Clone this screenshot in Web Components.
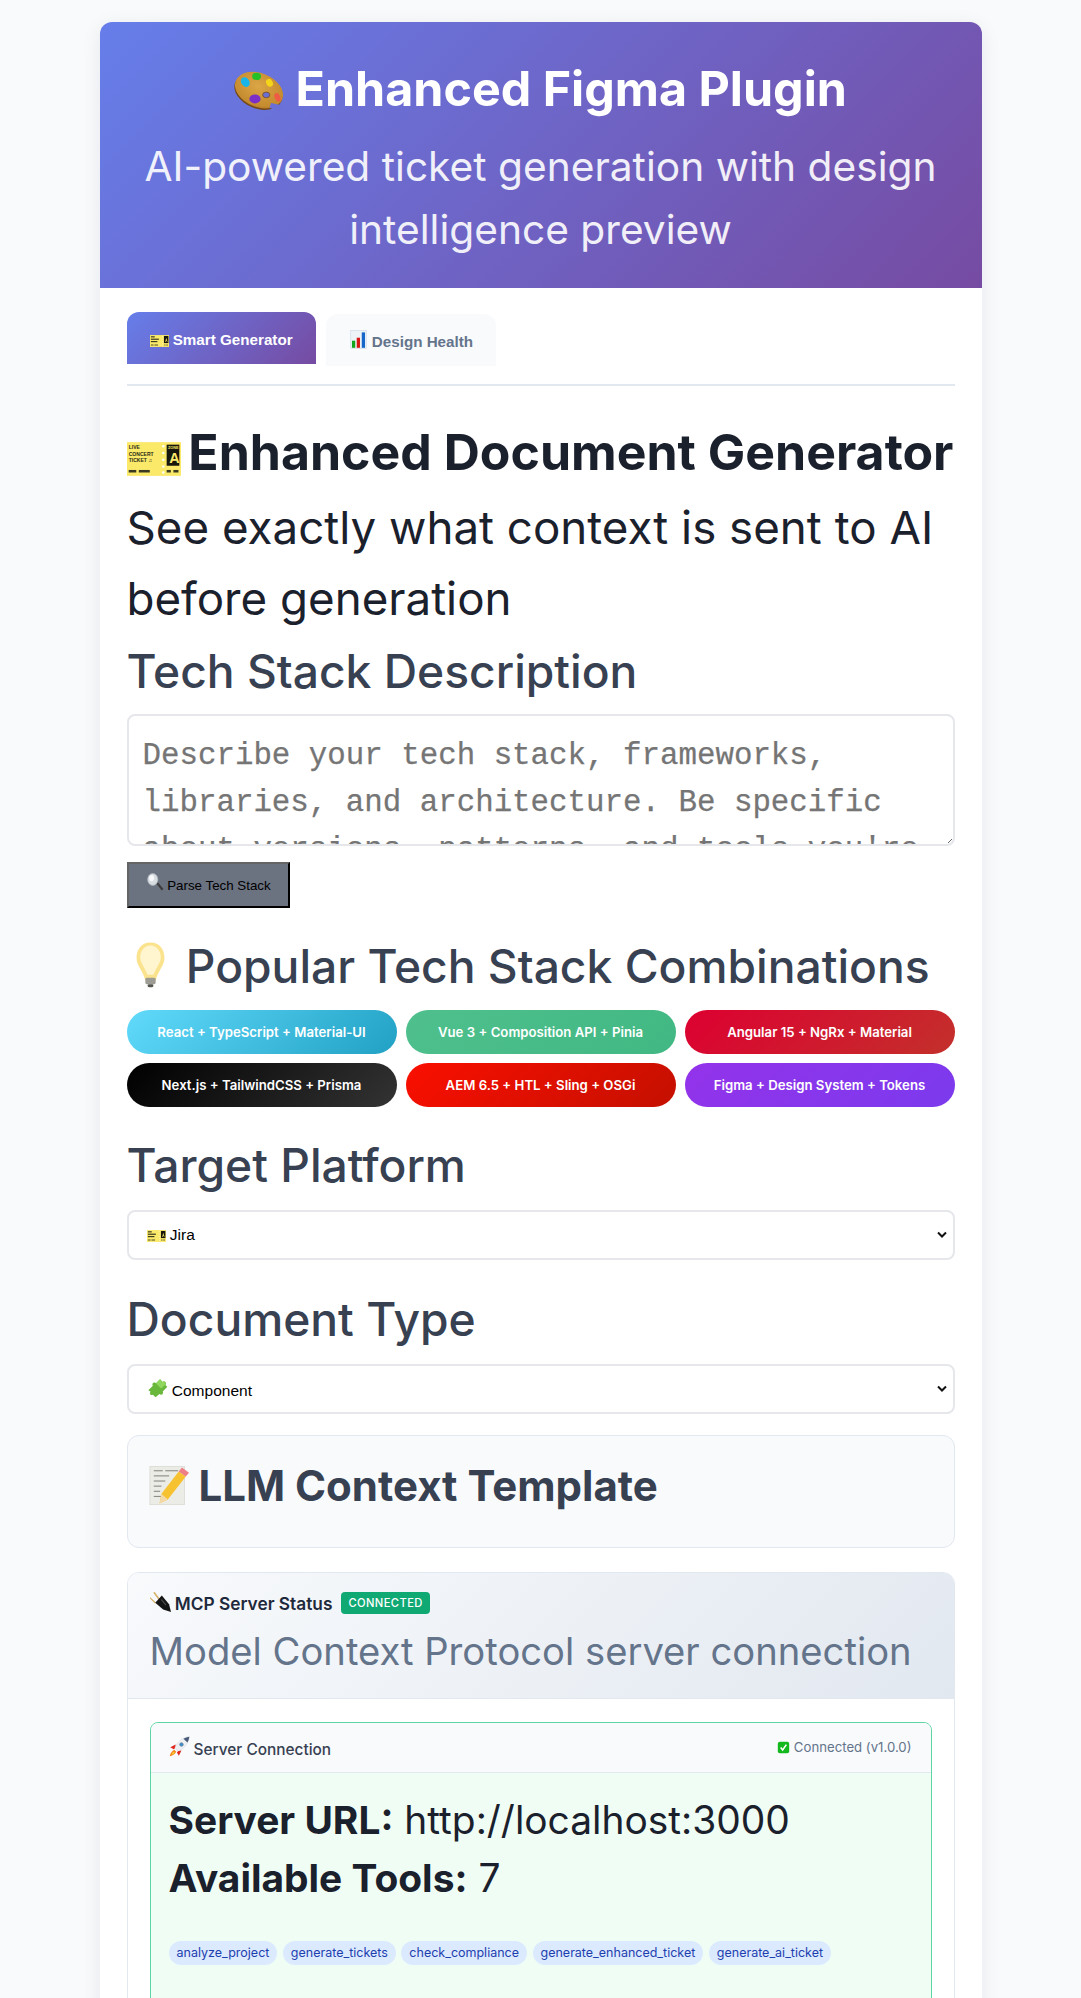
<!DOCTYPE html>
<html lang="en">
<head>
<meta charset="utf-8">
<title>Enhanced Figma Plugin</title>
<style>
html, body { margin: 0; height: 1998px; overflow: hidden; background: #f8fafc; font-family: Inter, "Liberation Sans", sans-serif; }
</style>
</head>
<body>
<plugin-shell>
  <plugin-header slot="header">
    <span slot="title"><emoji-icon name="palette" size="50" tall="43"></emoji-icon> Enhanced Figma Plugin</span>
    AI-powered ticket generation with design intelligence preview
  </plugin-header>

  <tab-bar>
    <tab-item active><emoji-icon name="ticket" size="19" tall="12"></emoji-icon> Smart Generator</tab-item>
    <tab-item><emoji-icon name="chart" size="19"></emoji-icon> Design Health</tab-item>
  </tab-bar>

  <page-intro>
    <span slot="title"><emoji-icon name="ticketBig" size="54" tall="34" style="margin-right:-4px"></emoji-icon> Enhanced Document Generator</span>
    See exactly what context is sent to AI before generation
  </page-intro>

  <field-label>Tech Stack Description</field-label>
  <mono-textbox>Describe your tech stack, frameworks, libraries, and architecture. Be specific about versions, patterns, and tools you're using.</mono-textbox>
  <plain-button><emoji-icon name="magnifier" size="18"></emoji-icon> Parse Tech Stack</plain-button>

  <field-label spaced><emoji-icon name="bulb" size="47"></emoji-icon> Popular Tech Stack Combinations</field-label>
  <pill-grid>
    <stack-pill from="#61dafb" to="#21a1c4">React + TypeScript + Material-UI</stack-pill>
    <stack-pill from="#4fc08d" to="#41b883">Vue 3 + Composition API + Pinia</stack-pill>
    <stack-pill from="#dd0031" to="#c3302b">Angular 15 + NgRx + Material</stack-pill>
    <stack-pill from="#000000" to="#333333">Next.js + TailwindCSS + Prisma</stack-pill>
    <stack-pill from="#fa0f00" to="#c41000">AEM 6.5 + HTL + Sling + OSGi</stack-pill>
    <stack-pill from="#9333ea" to="#7c3aed">Figma + Design System + Tokens</stack-pill>
  </pill-grid>

  <field-label spaced style="margin-bottom:9px">Target Platform</field-label>
  <select-box><emoji-icon name="ticket" size="19" tall="12"></emoji-icon> Jira</select-box>

  <field-label spaced style="margin-top:23px;margin-bottom:9px">Document Type</field-label>
  <select-box><emoji-icon name="puzzle" size="21"></emoji-icon> Component</select-box>

  <template-panel><emoji-icon name="memo" size="41"></emoji-icon> LLM Context Template</template-panel>

  <status-panel>
    <span slot="title"><emoji-icon name="plug" size="21"></emoji-icon> MCP Server Status</span>
    <span slot="badge">CONNECTED</span>
    <span slot="subtitle">Model Context Protocol server connection</span>
    <connection-card>
      <span slot="title"><emoji-icon name="rocket" size="21"></emoji-icon> Server Connection</span>
      <span slot="state"><emoji-icon name="check" size="13"></emoji-icon> Connected (v1.0.0)</span>
      <info-line><b>Server URL:</b> http://localhost:3000</info-line>
      <info-line><b>Available Tools:</b> 7</info-line>
      <tool-list>
        <tool-tag>analyze_project</tool-tag>
        <tool-tag>generate_tickets</tool-tag>
        <tool-tag>check_compliance</tool-tag>
        <tool-tag>generate_enhanced_ticket</tool-tag>
        <tool-tag>generate_ai_ticket</tool-tag>
      </tool-list>
    </connection-card>
  </status-panel>
</plugin-shell>

<script>
const EMOJI = {
  palette: `<svg viewBox="1 8 62 53"><defs><radialGradient id="wood" cx=".45" cy=".4" r=".7"><stop offset="0" stop-color="#dba646"/><stop offset=".8" stop-color="#c48a2e"/><stop offset="1" stop-color="#9a6420"/></radialGradient></defs><g transform="rotate(22 32 34)"><ellipse cx="32" cy="36" rx="31" ry="21" fill="#74491a"/><ellipse cx="32" cy="34" rx="31" ry="21" fill="url(#wood)"/></g><ellipse cx="41" cy="40" rx="4.500" ry="3.500" fill="#6a6fd6" stroke="#7a4d18"/><path d="M47 50l14 3-4 8-12-5z" fill="#6a6fd6"/><ellipse cx="15" cy="24" rx="5" ry="6.500" transform="rotate(-35 15 24)" fill="#19b5e8"/><ellipse cx="29" cy="17" rx="5.500" ry="4.500" fill="#25c025"/><ellipse cx="45" cy="25" rx="4" ry="5" transform="rotate(-30 45 25)" fill="#f4d51a"/><ellipse cx="27" cy="45" rx="7" ry="5.500" fill="#7b2fc9"/><ellipse cx="55" cy="43" rx="3.500" ry="5.500" transform="rotate(-25 55 43)" fill="#ef5b45"/></svg>`,
  ticket: `<svg viewBox="0 0 64 40"><rect width="64" height="40" fill="#fbe96a"/><rect x="47" y="3" width="15" height="24" fill="#16160c"/><path d="M51 23l3.500-12h1l3.500 12h-2l-.7-3h-2.600l-.7 3zM53.300 18.300h1.900l-.9-3.500z" fill="#fbe96a"/><g fill="#3a3a20"><rect x="3" y="4" width="13" height="4"/><rect x="3" y="12" width="27" height="4"/><rect x="3" y="20" width="22" height="4"/><rect x="3" y="32" width="9" height="3"/><rect x="15" y="32" width="12" height="3"/><rect x="48" y="32" width="4" height="3"/><rect x="55" y="32" width="5" height="3"/></g><g fill="#fff"><circle cx="43" cy="5" r="1.500"/><circle cx="43" cy="13" r="1.500"/><circle cx="43" cy="21" r="1.500"/><circle cx="43" cy="29" r="1.500"/><circle cx="43" cy="36" r="1.500"/></g></svg>`,
  ticketBig: `<svg viewBox="0 0 64 40"><rect width="64" height="40" fill="#fbe96a"/><rect x="47" y="3" width="15" height="25" fill="#16160c"/><g font-family="Liberation Sans, sans-serif" font-weight="700" fill="#2a2a14" font-size="6"><text x="2" y="8">LIVE</text><text x="2" y="16">CONCERT</text><text x="2" y="24">TICKET ♫</text></g><text x="48.500" y="8" font-family="Liberation Sans, sans-serif" font-size="4.500" font-weight="700" fill="#fbe96a">ZONE</text><text x="50" y="25" font-family="Liberation Sans, sans-serif" font-size="17" font-weight="700" fill="#fbe96a">A</text><g fill="#3a3a20"><rect x="2" y="33" width="9" height="3"/><rect x="14" y="33" width="13" height="3"/><rect x="47" y="33" width="5" height="3"/><rect x="55" y="33" width="6" height="3"/></g><g fill="#fff"><circle cx="43" cy="5" r="1.500"/><circle cx="43" cy="13" r="1.500"/><circle cx="43" cy="21" r="1.500"/><circle cx="43" cy="29" r="1.500"/><circle cx="43" cy="36" r="1.500"/></g></svg>`,
  chart: `<svg viewBox="0 0 64 64"><rect x="6" y="2" width="52" height="60" fill="#eef3f8" stroke="#c9d6e4" stroke-width="2"/><rect x="10" y="36" width="11" height="24" fill="#0fa31e"/><rect x="26" y="26" width="11" height="34" fill="#d81515"/><rect x="43" y="8" width="11" height="52" fill="#1766c9"/></svg>`,
  magnifier: `<svg viewBox="0 0 64 64"><path d="M36 36l6-3 20 24-6 5z" fill="#3b3b3b"/><ellipse cx="24" cy="23" rx="18" ry="21" fill="#d8dde2" stroke="#b0b6bc" stroke-width="3"/><ellipse cx="20" cy="18" rx="9" ry="11" fill="#f6f8fa"/></svg>`,
  bulb: `<svg viewBox="0 0 64 64"><path d="M32 2C19 2 13 12 13 23c0 11 9 17 12 31h14c3-14 12-20 12-31C51 12 45 2 32 2z" fill="#fbe38e"/><path d="M32 6c-9 0-14 8-14 16s7 15 10 24h8c3-9 10-16 10-24S41 6 32 6z" fill="#fff6cf"/><rect x="25" y="50" width="14" height="9" rx="2" fill="#9c9c94"/><rect x="28" y="59" width="8" height="4" rx="2" fill="#55554f"/></svg>`,
  puzzle: `<svg viewBox="0 0 64 64"><path d="M4 40l14-13c-5-7 4-14 10-8l12-12 8 8c6-5 14 3 8 9l6 6-14 14c4 7-4 13-10 8L26 62l-8-8c-7 4-12-4-7-9z" fill="#69b83c"/><path d="M27 19l12-12 8 8c6-5 14 3 8 9L43 35z" fill="#8fd65c"/></svg>`,
  memo: `<svg viewBox="0 0 64 64"><rect x="3" y="2" width="54" height="60" fill="#ececE6" stroke="#d4d4cc"/><g stroke="#7d7d78" stroke-width="1.500"><path d="M9 9h14M27 9h20M9 17h24M9 25h18M9 33h12M9 41h10M9 49h14"/></g><path d="M18 60l3-15L48 10l11 8-28 36z" fill="#f7c230"/><path d="M18 60l3-15 10 9z" fill="#f3d9a8"/><path d="M48 10l5-6 11 8-5 6z" fill="#ef7f86"/></svg>`,
  plug: `<svg viewBox="0 0 64 64"><path d="M14 2l18 25-4 3L10 5zM1 19l17 16-3 3L-1 22z" fill="#d6b26a"/><path d="M16 36L36 14l22 26 6 24-24-8z" fill="#141414"/><path d="M36 24l14 18-3 2-14-17z" fill="#4a4a4a"/></svg>`,
  rocket: `<svg viewBox="0 0 64 64"><path d="M20 26L4 34l10 6 6-4zM38 44l-8 16-6-10 4-4z" fill="#e0281f"/><path d="M62 2C44 4 26 16 18 36l10 10c20-8 32-26 34-44z" fill="#eef0f4" stroke="#c3c9d2"/><path d="M62 2c-7 1-13 3-18 6l12 12c3-5 5-11 6-18z" fill="#4a5a78"/><circle cx="38" cy="26" r="5.500" fill="#3b8fd4" stroke="#6b7a8c" stroke-width="2"/><path d="M16 42C8 46 4 54 2 62c8-2 16-6 20-14z" fill="#f5871c"/><path d="M14 48c-3 2-5 6-6 9 4-1 7-3 9-6z" fill="#fbd63a"/></svg>`,
  check: `<svg viewBox="0 0 64 64"><rect x="4" y="4" width="56" height="56" rx="10" fill="#12b81c"/><path d="M18 32l10 12 18-26" fill="none" stroke="#fff" stroke-width="8"/></svg>`
}

// small helper so each element only has to give its markup
class ShadowBase extends HTMLElement {
  constructor(html) {
    super()
    this.attachShadow({ mode: 'open' }).innerHTML = html
  }
}

class EmojiIcon extends HTMLElement {
  constructor() {
    super()
    this.attachShadow({ mode: 'open' })
  }
  connectedCallback() {
    const size = this.getAttribute('size') || 16
    const tall = this.getAttribute('tall') || size
    this.shadowRoot.innerHTML = `<style>
      :host { display: inline-block; vertical-align: -0.12em; width: ${size}px; height: ${tall}px; }
      svg { display: block; width: 100%; height: 100%; }
    </style>${EMOJI[this.getAttribute('name')]}`
  }
}

class PluginShell extends ShadowBase {
  constructor() {
    super(`<style>
      :host { display: block; width: 882px; margin: 22px auto 0; background: #fff; border-radius: 12px; box-shadow: 0 4px 20px rgba(15,23,42,.08); }
      main { padding: 24px 27px 200px; display: flex; flex-direction: column; }
    </style><slot name="header"></slot><main><slot></slot></main>`)
  }
}

class PluginHeader extends ShadowBase {
  constructor() {
    super(`<style>
      :host { display: block; height: 266px; box-sizing: border-box; padding: 32px 32px 0; text-align: center; color: #fff; background: linear-gradient(135deg, #667eea 0%, #764ba2 100%); border-radius: 12px 12px 0 0; }
      h1 { margin: 0 0 12px; font-size: 48.400px; line-height: 70px; font-weight: 700; }
      p { margin: 0; font-size: 40.700px; line-height: 62.500px; opacity: .9; }
    </style><h1><slot name="title"></slot></h1><p><slot></slot></p>`)
  }
}

class TabBar extends ShadowBase {
  constructor() {
    super(`<style>
      :host { display: flex; align-items: flex-start; gap: 10px; height: 72px; border-bottom: 2px solid #e2e8f0; }
    </style><slot></slot>`)
  }
}

class TabItem extends ShadowBase {
  constructor() {
    super(`<style>
      :host { display: block; margin-top: 2px; padding: 0 23px; height: 52px; border-radius: 12px 12px 0 0; background: #f8fafc; color: #64748b; font: bold 15.200px/56px "Liberation Sans", sans-serif; white-space: nowrap; }
      :host([active]) { margin-top: 0; color: #fff; background: linear-gradient(135deg, #667eea 0%, #764ba2 100%); }
    </style><slot></slot>`)
  }
}

class PageIntro extends ShadowBase {
  constructor() {
    super(`<style>
      :host { display: block; margin-top: 30px; color: #1a202c; }
      h2 { margin: 0; font-size: 50px; line-height: 72px; font-weight: 700; white-space: nowrap; }
      p { margin: 4px 0 0; font-size: 45.700px; line-height: 71.400px; }
    </style><h2><slot name="title"></slot></h2><p><slot></slot></p>`)
  }
}

class FieldLabel extends ShadowBase {
  constructor() {
    super(`<style>
      :host { display: block; font-size: 46.200px; line-height: 72px; font-weight: 500; color: #374151; white-space: nowrap; margin-bottom: 7px; }
      :host([spaced]) { margin-top: 22px; margin-bottom: 8px; }
    </style><slot></slot>`)
  }
}

class MonoTextbox extends ShadowBase {
  constructor() {
    super(`<style>
      :host { display: block; position: relative; box-sizing: border-box; height: 132px; border: 2px solid #e5e7eb; border-radius: 8px; overflow: hidden; background: #fff; padding: 16px 14px; color: #757575; font: 30.800px/47px "Liberation Mono", monospace; -webkit-text-stroke: .25px #757575; }
      svg { position: absolute; right: 0; bottom: 0; }
    </style><slot></slot><svg width="8" height="8" viewBox="0 0 8 8"><path d="M7 3L3 7" stroke="#666" fill="none"/></svg>`)
  }
}

class PlainButton extends ShadowBase {
  constructor() {
    super(`<style>
      :host { display: block; align-self: flex-start; box-sizing: border-box; margin-top: 16px; padding: 0 17px; height: 46px; border: 2px outset #111; background: #6b7280; color: #000; font: 13.333px/43px "Liberation Sans", sans-serif; }
    </style><slot></slot>`)
  }
}

class PillGrid extends ShadowBase {
  constructor() {
    super(`<style>
      :host { display: grid; grid-template-columns: repeat(3, 1fr); gap: 9px; }
    </style><slot></slot>`)
  }
}

class StackPill extends ShadowBase {
  constructor() {
    super(`<style>
      :host { display: block; height: 44px; border-radius: 22px; text-align: center; color: #fff; font-size: 13.200px; line-height: 44px; font-weight: 600; white-space: nowrap; background: linear-gradient(135deg, var(--from), var(--to)); }
    </style><slot></slot>`)
  }
  connectedCallback() {
    this.style.setProperty('--from', this.getAttribute('from'))
    this.style.setProperty('--to', this.getAttribute('to'))
  }
}

class SelectBox extends ShadowBase {
  constructor() {
    super(`<style>
      :host { display: flex; align-items: center; box-sizing: border-box; height: 50px; padding: 0 6px 0 18px; border: 2px solid #e5e7eb; border-radius: 8px; background: #fff; color: #000; font: 15.500px "Liberation Sans", sans-serif; }
      div { flex: 1; }
    </style><div><slot></slot></div><svg width="10" height="8" viewBox="0 0 10 8"><path d="M1 1.500l4 4 4-4" fill="none" stroke="#111" stroke-width="2"/></svg>`)
  }
}

class TemplatePanel extends ShadowBase {
  constructor() {
    super(`<style>
      :host { display: block; box-sizing: border-box; height: 113px; margin-top: 21px; padding: 20px 20px; background: #f8fafc; border: 1px solid #e2e8f0; border-radius: 12px; color: #374151; font-size: 42px; line-height: 60px; font-weight: 700; white-space: nowrap; }
    </style><slot></slot>`)
  }
}

class StatusPanel extends ShadowBase {
  constructor() {
    super(`<style>
      :host { display: block; margin-top: 24px; border: 1px solid #e2e8f0; border-radius: 12px; overflow: hidden; }
      header { height: 126px; box-sizing: border-box; padding: 14px 22px 0; background: linear-gradient(135deg, #f8fafc, #e2e8f0); border-bottom: 1px solid #e2e8f0; }
      .row { display: flex; align-items: center; gap: 9px; height: 32px; font-size: 17.300px; font-weight: 600; color: #1e293b; }
      .badge { padding: 0 7px; height: 22px; line-height: 22px; border-radius: 4px; background: #10a974; color: #fff; font-size: 11.200px; font-weight: 500; letter-spacing: .4px; }
      .sub { margin-top: 4px; font-size: 38.200px; line-height: 56px; color: #64748b; white-space: nowrap; }
      section { padding: 23px 22px 100px; }
    </style>
    <header>
      <div class="row"><slot name="title"></slot><span class="badge"><slot name="badge"></slot></span></div>
      <div class="sub"><slot name="subtitle"></slot></div>
    </header>
    <section><slot></slot></section>`)
  }
}

class ConnectionCard extends ShadowBase {
  constructor() {
    super(`<style>
      :host { display: block; border: 1px solid #5dd6a4; border-radius: 8px; overflow: hidden; background: #f0fdf4; }
      header { display: flex; justify-content: space-between; align-items: center; box-sizing: border-box; height: 50px; padding: 0 19px 0 18px; background: #f8fafc; border-bottom: 1px solid #e2e8f0; }
      .t { font-size: 15.400px; font-weight: 500; color: #374151; }
      .s { font-size: 13.200px; color: #64748b; }
      section { padding: 18px 18px 200px; }
    </style>
    <header><span class="t"><slot name="title"></slot></span><span class="s"><slot name="state"></slot></span></header>
    <section><slot></slot></section>`)
  }
}

class InfoLine extends ShadowBase {
  constructor() {
    super(`<style>
      :host { display: block; font-size: 38.900px; line-height: 58px; color: #1a202c; white-space: nowrap; }
    </style><slot></slot>`)
  }
}

class ToolList extends ShadowBase {
  constructor() {
    super(`<style>
      :host { display: flex; gap: 5.500px; margin-top: 34px; }
    </style><slot></slot>`)
  }
}

class ToolTag extends ShadowBase {
  constructor() {
    super(`<style>
      :host { display: block; padding: 0 8px; height: 24px; line-height: 24px; border-radius: 12px; background: #dbeafe; color: #1e40af; font-size: 12.500px; white-space: nowrap; }
    </style><slot></slot>`)
  }
}

customElements.define('emoji-icon', EmojiIcon)
customElements.define('plugin-shell', PluginShell)
customElements.define('plugin-header', PluginHeader)
customElements.define('tab-bar', TabBar)
customElements.define('tab-item', TabItem)
customElements.define('page-intro', PageIntro)
customElements.define('field-label', FieldLabel)
customElements.define('mono-textbox', MonoTextbox)
customElements.define('plain-button', PlainButton)
customElements.define('pill-grid', PillGrid)
customElements.define('stack-pill', StackPill)
customElements.define('select-box', SelectBox)
customElements.define('template-panel', TemplatePanel)
customElements.define('status-panel', StatusPanel)
customElements.define('connection-card', ConnectionCard)
customElements.define('info-line', InfoLine)
customElements.define('tool-list', ToolList)
customElements.define('tool-tag', ToolTag)
</script>
</body>
</html>
